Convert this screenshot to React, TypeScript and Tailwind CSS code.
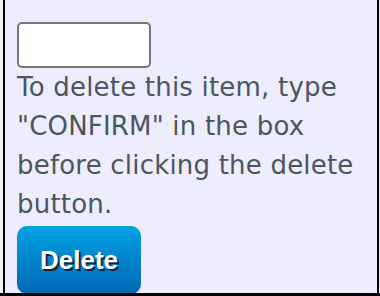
export default function App() {
  return (
    <div className="w-[380px] h-[296px] bg-[#f2f2f2] flex flex-col overflow-hidden" style={{ fontFamily: '"Liberation Sans", Arial, sans-serif' }}>
      <div className="ml-[3px] w-[376px] h-[293px] bg-[#eeedfd] border-l-2 border-r-2 border-black pl-[12px] pt-[22px] overflow-hidden">
        <input
          type="text"
          className="block w-[134px] h-[46px] bg-white border-2 border-[#76767e] rounded-[5px] outline-none"
        />
        <p className="font-['DejaVu_Sans',sans-serif] text-[26px] leading-[39px] tracking-[0.2px] text-[#4b5563] pr-[10px]">
          To delete this item, type "CONFIRM" in the box before clicking the delete button.
        </p>
        <button
          type="button"
          className="mt-[2px] w-[124px] h-[68px] rounded-[10px] bg-gradient-to-b from-[#00a2e2] to-[#0068b4] text-white font-bold text-[26px] [text-shadow:2px_2px_0_#12243a]"
        >
          Delete
        </button>
      </div>
      <div className="h-[3px] bg-black" />
    </div>
  );
}
